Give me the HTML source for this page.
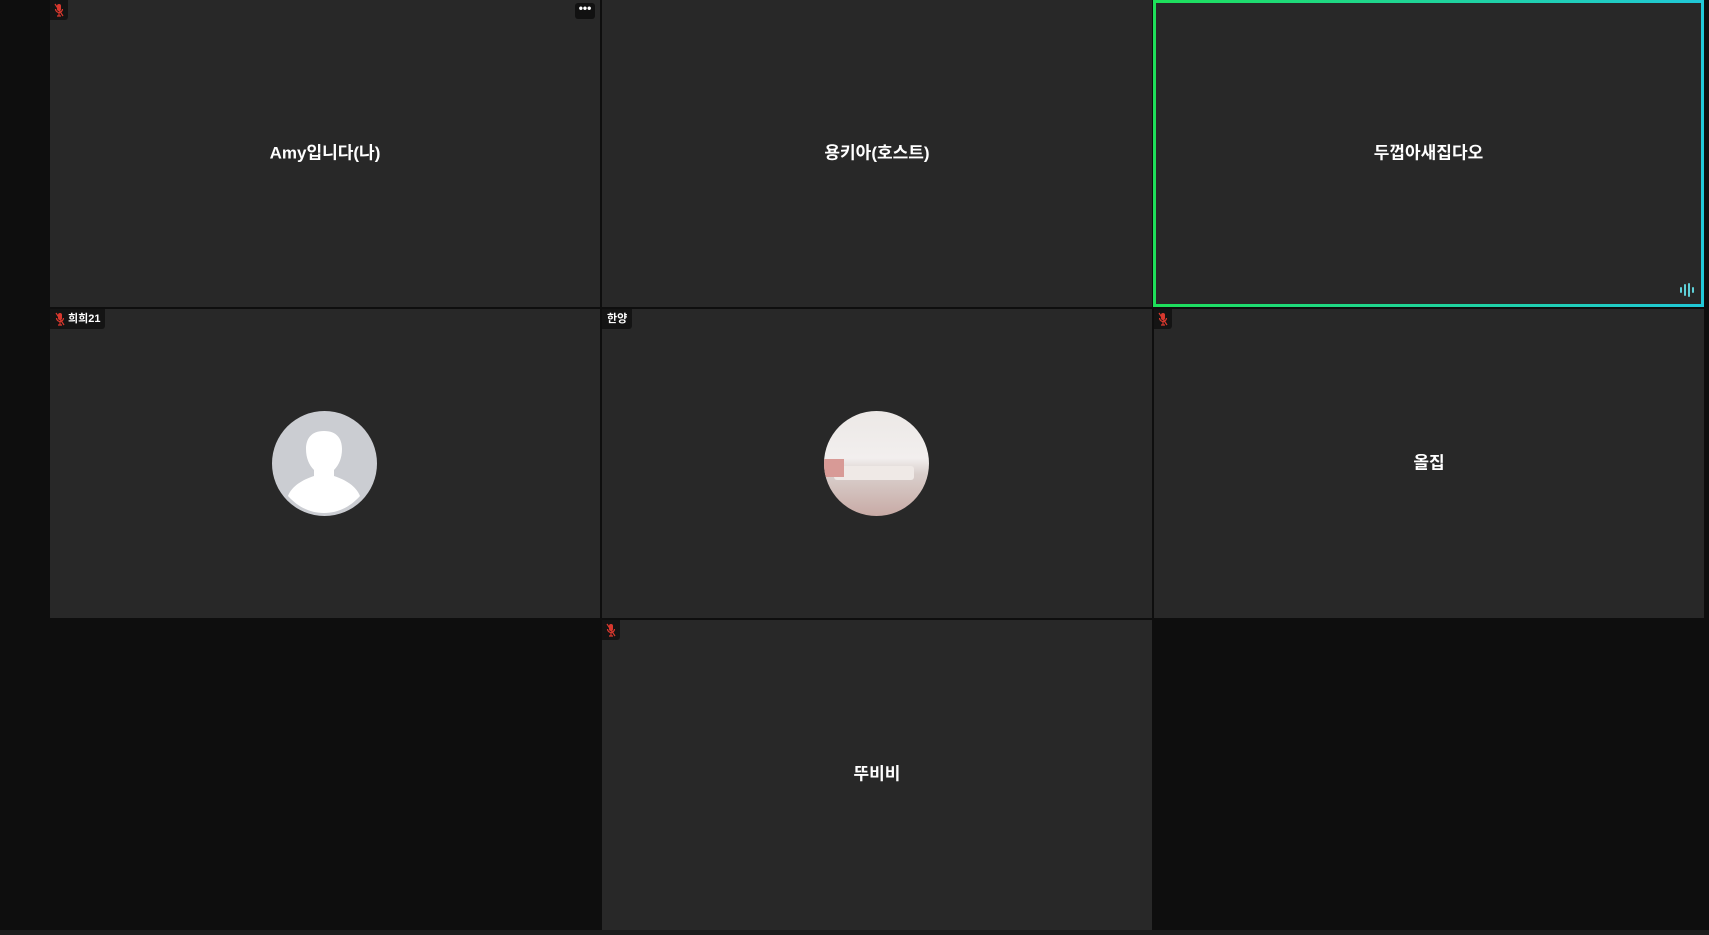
<!DOCTYPE html>
<html><head><meta charset="utf-8"><style>
html,body{margin:0;padding:0}
body{width:1709px;height:935px;background:#0e0e0e;position:relative;overflow:hidden;font-family:"Liberation Sans","Noto Sans CJK KR",sans-serif}
.t{position:absolute;background:#282828;box-sizing:border-box}
.n{position:absolute;left:0;right:0;top:50%;transform:translateY(-50%);margin-top:-3px;text-align:center;color:#fff;font-weight:bold;font-size:17px}
.tag{position:absolute;left:0;top:0;background:#141414;color:#fff;font-size:11px;font-weight:bold;height:20px;line-height:20px;padding:0 5px;border-radius:0 0 3px 0;display:flex;align-items:center;gap:3px}
.mic{width:10px;height:14px}
.av{position:absolute;left:50%;top:50%;width:105px;height:105px;margin:-53px 0 0 -53px;border-radius:50%;overflow:hidden}
</style></head><body>
<svg width="0" height="0" style="position:absolute"><defs><symbol id="m" viewBox="0 0 10 14"><rect x="3" y="1" width="4" height="7" rx="2" fill="#d9382e"/><path d="M1.5 6a3.5 3.5 0 0 0 7 0M5 10v3M3 13h4" stroke="#d9382e" stroke-width="1.2" fill="none"/><path d="M1 1l8 12" stroke="#d9382e" stroke-width="1.2"/></symbol></defs></svg>

<div class="t" style="left:50px;top:0;width:550px;height:307px">
<div class="tag" style="padding:0 4px"><svg class="mic"><use href="#m"/></svg></div>
<div style="position:absolute;right:5px;top:3px;width:20px;height:16px;background:#111;border-radius:3px;color:#fff;font-size:12px;line-height:10px;text-align:center;font-weight:bold">•••</div>
<div class="n">Amy입니다(나)</div></div>
<div class="t" style="left:602px;top:0;width:550px;height:307px"><div class="n">용키아(호스트)</div></div>
<div class="t" style="left:1153px;top:0;width:551px;height:307px;border:3px solid;border-image:linear-gradient(90deg,#1ee05a,#20c8d8) 1">
<div class="n">두껍아새집다오</div>
<svg style="position:absolute;right:6px;bottom:6px" width="16" height="16" viewBox="0 0 16 16"><g stroke="#5fd0d8" stroke-width="2" stroke-linecap="round"><path d="M2 6v4M6 3v10M10 2v12M14 6v4"/></g></svg></div>

<div class="t" style="left:50px;top:309px;width:550px;height:309px">
<div class="tag"><svg class="mic"><use href="#m"/></svg>희희21</div>
<div class="av" style="background:#cbcdd2"><svg width="105" height="105" viewBox="0 0 105 105"><path d="M52 20c-13 0-18 8-18 18 0 9 3 16 8 21v6c-12 4-22 10-26 20 10 11 22 17 36 17s26-6 36-17c-4-10-14-16-26-20v-6c5-5 8-12 8-21 0-10-5-18-18-18z" fill="#fff"/></svg></div></div>
<div class="t" style="left:602px;top:309px;width:550px;height:309px">
<div class="tag">한양</div>
<div class="av" style="background:linear-gradient(#ece8e6 0%,#f2efee 45%,#d9cfcc 60%,#c8aaa5 100%)"><div style="position:absolute;left:10px;top:55px;width:80px;height:14px;background:#efe9e6;border-radius:3px"></div><div style="position:absolute;left:0;top:48px;width:20px;height:18px;background:#d89a96"></div></div></div>
<div class="t" style="left:1154px;top:309px;width:550px;height:309px">
<div class="tag" style="padding:0 4px"><svg class="mic"><use href="#m"/></svg></div>
<div class="n">올집</div></div>

<div class="t" style="left:602px;top:620px;width:550px;height:310px">
<div class="tag" style="padding:0 4px"><svg class="mic"><use href="#m"/></svg></div>
<div class="n">뚜비비</div></div>
<div style="position:absolute;left:0;top:930px;width:1709px;height:5px;background:#1c1c1c"></div>
</body></html>
